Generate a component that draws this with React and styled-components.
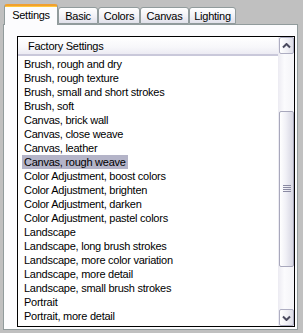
import React from "react";
import styled, { createGlobalStyle } from "styled-components";

const Global = createGlobalStyle`
  html, body { margin: 0; padding: 0; background: #c0c0c0; }
  body { font-family: "Liberation Sans", Arial, sans-serif; }
`;

const Page = styled.div`
  width: 303px;
  height: 333px;
  box-sizing: border-box;
  padding: 4px 5px 3px 3px;
  background: #c0c0c0;
  display: flex;
  flex-direction: column;
  font-family: "Liberation Sans", Arial, sans-serif;
  font-size: 11px;
  letter-spacing: -0.25px;
  color: #000;
`;

const TabStrip = styled.div`
  height: 21px;
  display: flex;
  align-items: flex-end;
  padding-left: 1px;
  margin-bottom: -1px;
  position: relative;
  z-index: 1;
`;

const Tab = styled.div`
  box-sizing: border-box;
  width: ${(p) => p.$w}px;
  height: ${(p) => (p.$active ? 21 : 17)}px;
  margin-bottom: ${(p) => (p.$active ? 0 : 1)}px;
  border: 1px solid #919b9c;
  border-bottom: ${(p) => (p.$active ? "none" : "1px solid #919b9c")};
  border-top: ${(p) => (p.$active ? "2px solid #f0a030" : "1px solid #919b9c")};
  border-radius: 3px 3px 0 0;
  background: ${(p) =>
    p.$active
      ? "linear-gradient(#ffc83c 0, #ffc83c 1px, #fcfcfe 1px)"
      : "linear-gradient(#ffffff, #f1f1f6 55%, #e0e0ea)"};
  display: flex;
  align-items: center;
  justify-content: center;
  padding-bottom: ${(p) => (p.$active ? 2 : 0)}px;
  white-space: nowrap;
`;

const Panel = styled.div`
  flex: 1;
  min-height: 0;
  box-sizing: border-box;
  border: 1px solid #919b9c;
  background: #fcfcfe;
  padding: 11px 2px 2px 13px;
  display: flex;
`;

const ListBox = styled.div`
  flex: 1;
  min-width: 0;
  border: 1px solid #000;
  background: #fff;
  display: flex;
  overflow: hidden;
`;

const ListMain = styled.div`
  flex: 1;
  min-width: 0;
  display: flex;
  flex-direction: column;
  overflow: hidden;
`;

const Header = styled.div`
  height: 19px;
  flex-shrink: 0;
  box-sizing: border-box;
  border-bottom: 2px solid #c9c8da;
  background: linear-gradient(#ffffff, #f7f7fa 60%, #ecebf3);
  padding-left: 10px;
  padding-top: 1px;
  display: flex;
  align-items: center;
`;

const Items = styled.div`
  padding-top: 1px;
  display: flex;
  flex-direction: column;
`;

const Item = styled.div`
  height: 14px;
  display: flex;
  align-items: center;
  padding-left: 4px;
`;

const ItemLabel = styled.span`
  height: 14px;
  line-height: 14px;
  padding: 0 2px;
  white-space: nowrap;
  background: ${(p) => (p.$selected ? "#b4b4c8" : "transparent")};
`;

const ScrollBar = styled.div`
  width: 16px;
  flex-shrink: 0;
  display: flex;
  flex-direction: column;
  background: linear-gradient(to right, #ecebf2, #fbfbfd 40%, #f3f3f7);
`;

const ArrowButton = styled.div`
  height: 17px;
  box-sizing: border-box;
  margin-left: 1px;
  border: 1px solid #aeaec2;
  border-radius: 2px;
  background: linear-gradient(to right, #ffffff, #eeeef4 60%, #dcdce6);
  display: flex;
  align-items: center;
  justify-content: center;
  flex-shrink: 0;
`;

const Track = styled.div`
  flex: 1;
  display: flex;
  flex-direction: column;
  padding-top: 57px;
`;

const Thumb = styled.div`
  height: 156px;
  box-sizing: border-box;
  margin-left: 1px;
  border: 1px solid #a8a8bc;
  border-radius: 2px;
  background: linear-gradient(to right, #ffffff, #f0f0f6 45%, #d6d6e2);
  display: flex;
  align-items: center;
  justify-content: center;
`;

const Chevron = ({ down }) => (
  <svg width="9" height="6" viewBox="0 0 9 6">
    <path
      d={down ? "M1 1.5 L4.5 5 L8 1.5" : "M1 4.5 L4.5 1 L8 4.5"}
      fill="none"
      stroke="#4a4a5e"
      strokeWidth="2"
    />
  </svg>
);

const Grip = () => (
  <svg width="8" height="8" viewBox="0 0 8 8">
    {[0, 2, 4, 6].map((y) => (
      <rect key={y} x="0" y={y} width="8" height="1" fill="#8a8aa2" />
    ))}
  </svg>
);

const tabs = [
  { label: "Settings", w: 54, active: true },
  { label: "Basic", w: 40 },
  { label: "Colors", w: 42 },
  { label: "Canvas", w: 49 },
  { label: "Lighting", w: 47 },
];

const items = [
  "Brush, rough and dry",
  "Brush, rough texture",
  "Brush, small and short strokes",
  "Brush, soft",
  "Canvas, brick wall",
  "Canvas, close weave",
  "Canvas, leather",
  "Canvas, rough weave",
  "Color Adjustment, boost colors",
  "Color Adjustment, brighten",
  "Color Adjustment, darken",
  "Color Adjustment, pastel colors",
  "Landscape",
  "Landscape, long brush strokes",
  "Landscape, more color variation",
  "Landscape, more detail",
  "Landscape, small brush strokes",
  "Portrait",
  "Portrait, more detail",
];

export default function App() {
  return (
    <>
      <Global />
      <Page>
        <TabStrip>
          {tabs.map((t) => (
            <Tab key={t.label} $w={t.w} $active={t.active}>
              {t.label}
            </Tab>
          ))}
        </TabStrip>
        <Panel>
          <ListBox>
            <ListMain>
              <Header>Factory Settings</Header>
              <Items>
                {items.map((it) => (
                  <Item key={it}>
                    <ItemLabel $selected={it === "Canvas, rough weave"}>{it}</ItemLabel>
                  </Item>
                ))}
              </Items>
            </ListMain>
            <ScrollBar>
              <ArrowButton>
                <Chevron />
              </ArrowButton>
              <Track>
                <Thumb>
                  <Grip />
                </Thumb>
              </Track>
              <ArrowButton>
                <Chevron down />
              </ArrowButton>
            </ScrollBar>
          </ListBox>
        </Panel>
      </Page>
    </>
  );
}
